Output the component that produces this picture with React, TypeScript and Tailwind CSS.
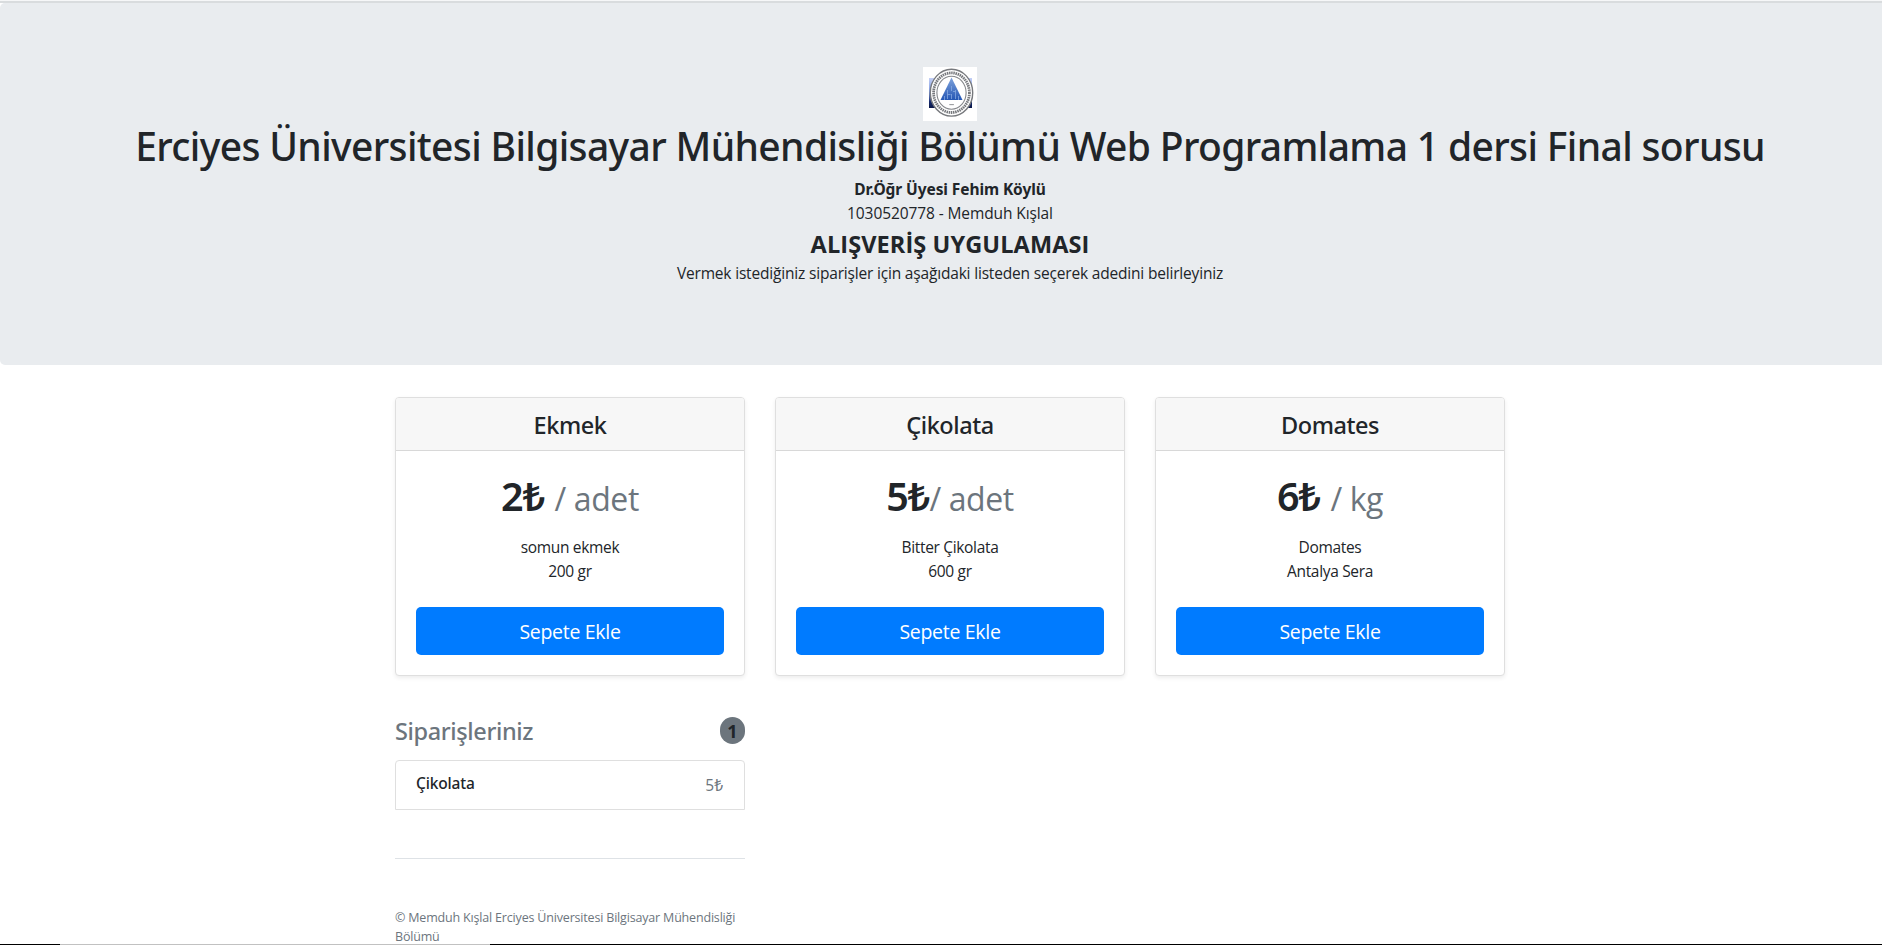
type Product = {
  name: string;
  price: string;
  unit: string;
  spaced: boolean;
  lines: [string, string];
};

const products: Product[] = [
  { name: "Ekmek", price: "2₺", unit: "/ adet", spaced: true, lines: ["somun ekmek", "200 gr"] },
  { name: "Çikolata", price: "5₺", unit: "/ adet", spaced: false, lines: ["Bitter Çikolata", "600 gr"] },
  { name: "Domates", price: "6₺", unit: "/ kg", spaced: true, lines: ["Domates", "Antalya Sera"] },
];

function Crest() {
  return (
    <svg viewBox="0 0 54 54" className="block h-[54px] w-[54px]">
      <defs>
        <linearGradient id="band" x1="0" y1="0" x2="0" y2="1">
          <stop offset="0" stopColor="#c3cff5" />
          <stop offset="0.45" stopColor="#7f9be0" />
          <stop offset="0.8" stopColor="#15296b" />
          <stop offset="1" stopColor="#0a1748" />
        </linearGradient>
        <linearGradient id="peak" x1="0" y1="0" x2="0" y2="1">
          <stop offset="0" stopColor="#7fa3dc" />
          <stop offset="1" stopColor="#2456b4" />
        </linearGradient>
      </defs>
      <rect width="54" height="54" fill="#fff" />
      <rect x="6" y="11" width="43" height="30" fill="url(#band)" />
      <ellipse cx="28.5" cy="25.7" rx="21.2" ry="23.4" fill="#fff" stroke="#77797d" strokeWidth="1.4" />
      <ellipse cx="28.5" cy="25.7" rx="17.9" ry="19.8" fill="none" stroke="#77797d" strokeWidth="2.8" strokeDasharray="1.5 0.7" />
      <ellipse cx="28.5" cy="25.7" rx="14.6" ry="16.5" fill="#fff" stroke="#85878b" strokeWidth="1.1" />
      <path d="M28.5 10.5 39.5 33h-22z" fill="url(#peak)" />
      <path
        d="M24.5 23v9M28.5 19v5M28.5 27v5M32.5 23v9M21.5 29v4M35.5 29v4M24.5 27.5h3M30 24.5h2.5"
        stroke="#8fb0e4"
        strokeWidth="0.7"
        fill="none"
      />
      <path d="M26.3 37.6h4.6" stroke="#9a9ca0" strokeWidth="1.1" />
    </svg>
  );
}

function ProductCard({ product }: { product: Product }) {
  return (
    <section className="flex h-[279px] w-[350px] flex-col rounded-[4px] border border-[#dfdfdf] bg-white text-center shadow-[0_2px_4px_rgba(0,0,0,0.075)]">
      <div className="h-[53px] rounded-t-[3px] border-b border-[#d8d8d8] bg-[#f7f7f7] pt-px">
        <h4 className="font-['Noto_Sans'] text-[23.5px] leading-[52px] font-medium tracking-[-0.45px]">{product.name}</h4>
      </div>
      <div className="flex flex-1 flex-col px-5 pt-[21px]">
        <h1 className="h-12 font-['Noto_Sans'] text-[39.5px] leading-[48px] font-semibold whitespace-pre">
          <span className="tracking-[-1px]">{product.price}</span>
          {product.spaced ? " " : ""}
          <span className="font-['Open_Sans'] text-[32px] font-normal tracking-[-0.4px] text-[#6c757d]">{product.unit}</span>
        </h1>
        <ul className="mt-[15px] text-[15.5px] leading-6 tracking-[-0.33px]">
          <li>{product.lines[0]}</li>
          <li>{product.lines[1]}</li>
        </ul>
        <button className="mt-6 h-12 w-full rounded-[5px] bg-[#007bff] pt-px text-[19.5px] leading-[48px] tracking-[-0.3px] text-white">
          Sepete Ekle
        </button>
      </div>
    </section>
  );
}

export default function App() {
  return (
    <div className="flex h-[945px] w-full flex-col overflow-hidden bg-white font-['Open_Sans','Noto_Sans',sans-serif] text-[#212529]">
      <div className="flex min-h-0 w-[1900px] flex-1 flex-col overflow-hidden">
        <div className="h-[3px] shrink-0 border-t border-[#f6f7f8] bg-[#d9dcde]" />
        <header className="flex h-[362px] shrink-0 flex-col items-center rounded-[5px] bg-[#e9ecef] pt-16 text-center text-[15.5px] leading-6">
          <Crest />
          <h1 className="mt-px font-['Noto_Sans'] text-[39px] leading-[48px] font-medium tracking-[-0.64px] whitespace-nowrap">
            Erciyes Üniversitesi Bilgisayar Mühendisliği Bölümü Web Programlama 1 dersi Final sorusu
          </h1>
          <p className="mt-[7px] font-['Noto_Sans'] font-bold tracking-[-0.09px]">Dr.Öğr Üyesi Fehim Köylü</p>
          <p className="tracking-[-0.1px]">1030520778 - Memduh Kışlal</p>
          <h2 className="mt-[5px] text-[23.5px] leading-[29px] font-bold tracking-[0.1px]">ALIŞVERİŞ UYGULAMASI</h2>
          <p className="mt-[2px] tracking-[-0.18px]">
            Vermek istediğiniz siparişler için aşağıdaki listeden seçerek adedini belirleyiniz
          </p>
        </header>

        <main className="mx-auto mt-8 flex w-[1110px] flex-col">
          <div className="flex gap-[30px]">
            {products.map((product) => (
              <ProductCard key={product.name} product={product} />
            ))}
          </div>

          <div className="w-[350px]">
            <div className="mt-10 flex items-start justify-between">
              <h4 className="mt-px font-['Noto_Sans'] text-[23.5px] leading-[29px] font-medium tracking-[-0.38px] text-[#6c757d]">
                Siparişleriniz
              </h4>
              <span className="mt-px flex h-[27px] w-[25px] items-center justify-center rounded-full bg-[#6c757d] text-[18px] leading-none font-bold">
                1
              </span>
            </div>
            <ul className="mt-[14px]">
              <li className="flex h-[50px] justify-between rounded-t-[4px] border border-[#dfdfdf] pr-[21px] pl-5 text-[15.5px] leading-6">
                <h6 className="mt-[10px] font-['Noto_Sans'] font-medium tracking-[-0.15px]">Çikolata</h6>
                <span className="mt-3 text-[#6c757d]">5₺</span>
              </li>
            </ul>
            <footer className="mt-12 border-t border-[#dee2e6] pt-[49px] text-[12.5px] leading-[19.2px] tracking-[-0.18px] text-[#6c757d]">
              © Memduh Kışlal Erciyes Üniversitesi Bilgisayar Mühendisliği Bölümü
            </footer>
          </div>
        </main>
      </div>
      <div className="flex h-px shrink-0 bg-black">
        <div className="ml-[60px] w-[430px] bg-[#c1c1c1]" />
      </div>
    </div>
  );
}
